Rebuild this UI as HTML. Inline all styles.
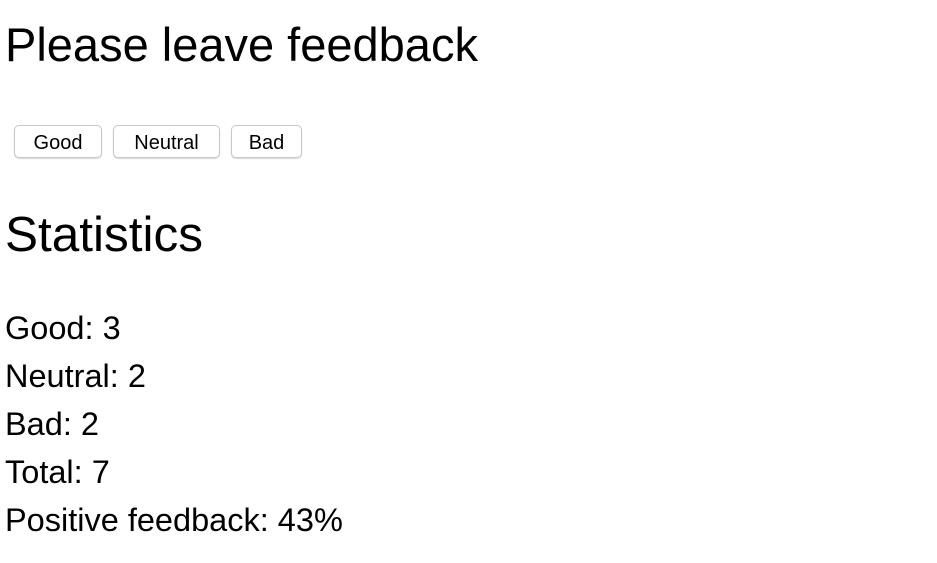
<!DOCTYPE html>
<html><head><style>
body{margin:0;background:#fff;font-family:"Liberation Sans",sans-serif;color:#000;}
.a{position:absolute;white-space:nowrap;line-height:1;}
.h{font-size:47px;}
.s{font-size:32.5px;}
.b{position:absolute;top:125px;height:31px;border:1px solid #c8c8c8;border-radius:5px;background:#fff;box-shadow:0 1px 1px rgba(0,0,0,.15);font-size:20px;text-align:center;line-height:35px;box-sizing:content-box;}
</style></head><body>
<div class="a h" style="left:5px;top:21px">Please leave feedback</div>
<div class="b" style="left:14px;width:86px">Good</div>
<div class="b" style="left:113px;width:105px">Neutral</div>
<div class="b" style="left:231px;width:69px">Bad</div>
<div class="a h" style="left:5px;top:210px;font-size:49.5px">Statistics</div>
<div class="a s" style="left:5px;top:312px">Good: 3</div>
<div class="a s" style="left:5px;top:360px">Neutral: 2</div>
<div class="a s" style="left:5px;top:408px">Bad: 2</div>
<div class="a s" style="left:5px;top:456px">Total: 7</div>
<div class="a s" style="left:5px;top:504px">Positive feedback: 43%</div>
</body></html>
